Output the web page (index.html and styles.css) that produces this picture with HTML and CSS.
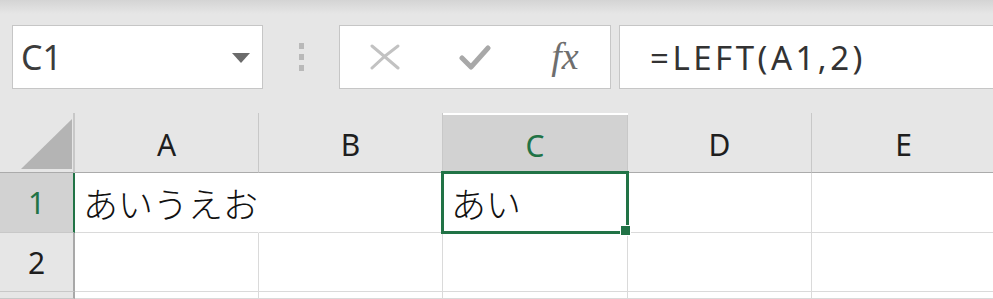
FILE: index.html
```html
<!DOCTYPE html>
<html lang="ja">
<head>
  <meta charset="UTF-8">
  <title>LEFT関数</title>
  <link rel="stylesheet" href="styles.css">
</head>
<body>
  <div class="toolbar">
    <div class="name-box">
      <span class="name">C1</span>
      <svg class="drop" width="18" height="10" viewBox="0 0 18 10"><path d="M0 0 H18 L9 10 Z" fill="#6b6b6b"/></svg>
    </div>
    <div class="grip"><span></span><span></span><span></span></div>
    <div class="fx-buttons">
      <div class="slot">
        <svg width="30" height="26" viewBox="0 0 30 26"><path d="M2 2 Q14 12 28 24 M28 2 Q14 12 2 24" stroke="#c2c2c2" stroke-width="3" fill="none" stroke-linecap="round"/></svg>
      </div>
      <div class="slot">
        <svg width="32" height="27" viewBox="0 0 32 27"><path d="M3 14 L12 23 L29 4" stroke="#a8a8a8" stroke-width="5" fill="none" stroke-linejoin="round" stroke-linecap="round"/></svg>
      </div>
      <div class="slot"><span class="fx">fx</span></div>
    </div>
    <div class="formula">=LEFT(A1,2)</div>
  </div>

  <div class="sheet">
    <div class="hd corner"><div class="tri"></div></div>
    <div class="hd col">A</div>
    <div class="hd col">B</div>
    <div class="hd col active">C</div>
    <div class="hd col">D</div>
    <div class="hd col">E</div>

    <div class="hd row active">1</div>
    <div class="cell spill">あいうえお</div>
    <div class="cell"></div>
    <div class="cell selected">あい</div>
    <div class="cell"></div>
    <div class="cell"></div>

    <div class="hd row">2</div>
    <div class="cell"></div>
    <div class="cell"></div>
    <div class="cell"></div>
    <div class="cell"></div>
    <div class="cell"></div>

    <div class="hd row"></div>
    <div class="cell"></div>
    <div class="cell"></div>
    <div class="cell"></div>
    <div class="cell"></div>
    <div class="cell"></div>
  </div>
</body>
</html>
```

FILE: styles.css
```css
/* Excel formula bar + grid */
body {
  margin: 0;
  background: #e6e6e6;
  font-family: "Noto Sans", "Noto Sans CJK JP", sans-serif;
  overflow: hidden;
}

.toolbar {
  display: flex;
  align-items: flex-start;
  height: 113px;
  padding: 25px 0 0 12px;
  box-sizing: border-box;
  background: linear-gradient(#d4d4d4, #e6e6e6 14px);
}

.name-box {
  width: 251px;
  height: 64px;
  box-sizing: border-box;
  background: #fff;
  border: 1px solid #c6c6c6;
  display: flex;
  align-items: center;
  justify-content: space-between;
  padding: 0 12px 0 8px;
}

.name {
  font-size: 34px;
  color: #3c3c3c;
}

.drop {
  margin-top: 2px;
}

.grip {
  width: 76px;
  height: 64px;
  display: flex;
  flex-direction: column;
  align-items: center;
  justify-content: center;
  gap: 5px;
}

.grip span {
  width: 5px;
  height: 6px;
  background: #b9b9b9;
}

.fx-buttons {
  width: 272px;
  height: 64px;
  box-sizing: border-box;
  background: #fff;
  border: 1px solid #c6c6c6;
  display: flex;
}

.slot {
  width: 90px;
  display: flex;
  align-items: center;
  justify-content: center;
}

.fx {
  font-family: "Liberation Serif", serif;
  font-style: italic;
  font-size: 38px;
  color: #6e6e6e;
  margin-bottom: 2px;
}

.formula {
  flex: 1;
  height: 64px;
  margin-left: 8px;
  box-sizing: border-box;
  background: #fff;
  border: 1px solid #c6c6c6;
  border-right: none;
  padding-left: 30px;
  display: flex;
  align-items: center;
  font-size: 33px;
  letter-spacing: 3.5px;
  color: #333;
}

.sheet {
  display: grid;
  grid-template-columns: 75px 184px 184px 185px 184px 184px;
  grid-template-rows: 60px 60px 59px 7px;
  width: 996px;
  background: #fff;
}

.hd {
  background: #e6e6e6;
  box-sizing: border-box;
  display: flex;
  align-items: center;
  justify-content: center;
  font-size: 30px;
  color: #1e1e1e;
}

.col {
  border-right: 1px solid #c8c8c8;
  border-bottom: 1px solid #ababab;
  padding-top: 4px;
}

.corner {
  border-right: 2px solid #c8c8c8;
  border-bottom: 1px solid #ababab;
  align-items: flex-end;
  justify-content: flex-end;
  padding: 0 1px 3px 0;
}

.tri {
  width: 51px;
  height: 50px;
  background: #b4b4b4;
  clip-path: polygon(100% 0, 100% 100%, 0 100%);
}

.row {
  border-right: 2px solid #a8a8a8;
  border-bottom: 1px solid #c8c8c8;
}

.hd.active {
  background: #d2d2d2;
  color: #217346;
}

.col.active {
  margin-top: 2px;
}

.row.active {
  border-right-color: #217346;
}

.cell {
  box-sizing: border-box;
  border-right: 1px solid #dadada;
  border-bottom: 1px solid #dadada;
  display: flex;
  align-items: center;
  padding-left: 8px;
  white-space: nowrap;
  font-family: "Noto Sans CJK JP", sans-serif;
  font-weight: 300;
  font-size: 35px;
  color: #111;
}

.spill {
  border-right-color: transparent;
  overflow: visible;
}

.selected {
  position: relative;
}

.selected::after {
  content: "";
  position: absolute;
  top: -2px;
  left: -2px;
  right: -2px;
  bottom: -2px;
  border: 3px solid #217346;
  z-index: 2;
}

.selected::before {
  content: "";
  position: absolute;
  right: -3px;
  bottom: -3px;
  width: 9px;
  height: 9px;
  background: #217346;
  box-shadow: 0 0 0 1px #fff;
  z-index: 3;
}
```
